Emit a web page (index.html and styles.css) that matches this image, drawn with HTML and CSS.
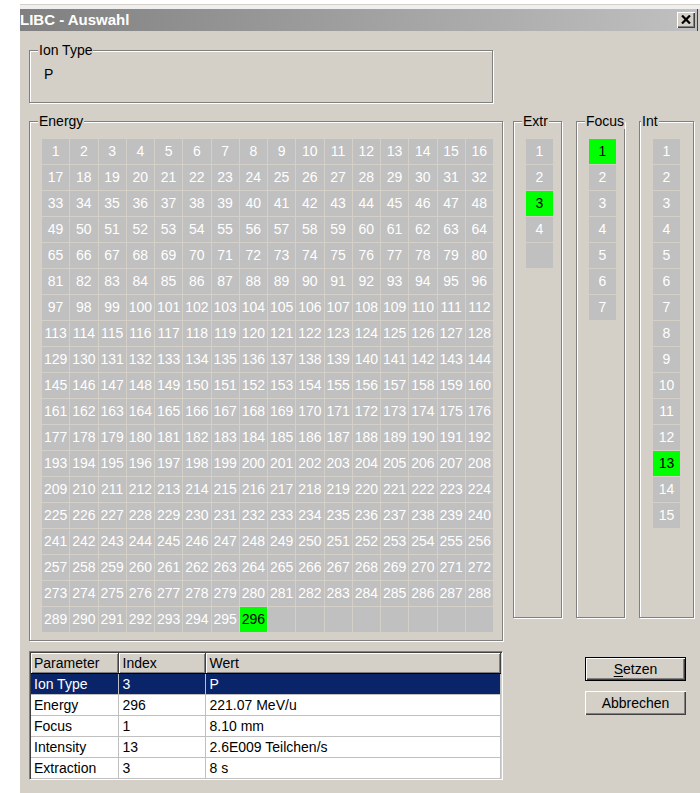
FILE: index.html
```html
<!DOCTYPE html>
<html lang="de">
<head>
<meta charset="utf-8">
<title>LIBC - Auswahl</title>
<link rel="stylesheet" href="styles.css">
</head>
<body>
<div class="window">
  <div class="frame-top"></div>
  <div class="titlebar">
    <span class="title">LIBC - Auswahl</span>
    <span class="close-btn">
      <svg width="10" height="9" viewBox="0 0 10 9"><path d="M1 0.5 L9 8.5 M9 0.5 L1 8.5" stroke="#000" stroke-width="2.2" fill="none"/></svg>
    </span>
  </div>
  <div class="content">
    <fieldset class="group ion-group">
      <legend>Ion Type</legend>
      <div class="ion-value">P</div>
    </fieldset>

    <div class="selectors">
      <fieldset class="group energy-group">
        <legend>Energy</legend>
        <div class="energy-grid">
          <span>1</span><span>2</span><span>3</span><span>4</span><span>5</span><span>6</span><span>7</span><span>8</span><span>9</span><span>10</span><span>11</span><span>12</span><span>13</span><span>14</span><span>15</span><span>16</span>
          <span>17</span><span>18</span><span>19</span><span>20</span><span>21</span><span>22</span><span>23</span><span>24</span><span>25</span><span>26</span><span>27</span><span>28</span><span>29</span><span>30</span><span>31</span><span>32</span>
          <span>33</span><span>34</span><span>35</span><span>36</span><span>37</span><span>38</span><span>39</span><span>40</span><span>41</span><span>42</span><span>43</span><span>44</span><span>45</span><span>46</span><span>47</span><span>48</span>
          <span>49</span><span>50</span><span>51</span><span>52</span><span>53</span><span>54</span><span>55</span><span>56</span><span>57</span><span>58</span><span>59</span><span>60</span><span>61</span><span>62</span><span>63</span><span>64</span>
          <span>65</span><span>66</span><span>67</span><span>68</span><span>69</span><span>70</span><span>71</span><span>72</span><span>73</span><span>74</span><span>75</span><span>76</span><span>77</span><span>78</span><span>79</span><span>80</span>
          <span>81</span><span>82</span><span>83</span><span>84</span><span>85</span><span>86</span><span>87</span><span>88</span><span>89</span><span>90</span><span>91</span><span>92</span><span>93</span><span>94</span><span>95</span><span>96</span>
          <span>97</span><span>98</span><span>99</span><span>100</span><span>101</span><span>102</span><span>103</span><span>104</span><span>105</span><span>106</span><span>107</span><span>108</span><span>109</span><span>110</span><span>111</span><span>112</span>
          <span>113</span><span>114</span><span>115</span><span>116</span><span>117</span><span>118</span><span>119</span><span>120</span><span>121</span><span>122</span><span>123</span><span>124</span><span>125</span><span>126</span><span>127</span><span>128</span>
          <span>129</span><span>130</span><span>131</span><span>132</span><span>133</span><span>134</span><span>135</span><span>136</span><span>137</span><span>138</span><span>139</span><span>140</span><span>141</span><span>142</span><span>143</span><span>144</span>
          <span>145</span><span>146</span><span>147</span><span>148</span><span>149</span><span>150</span><span>151</span><span>152</span><span>153</span><span>154</span><span>155</span><span>156</span><span>157</span><span>158</span><span>159</span><span>160</span>
          <span>161</span><span>162</span><span>163</span><span>164</span><span>165</span><span>166</span><span>167</span><span>168</span><span>169</span><span>170</span><span>171</span><span>172</span><span>173</span><span>174</span><span>175</span><span>176</span>
          <span>177</span><span>178</span><span>179</span><span>180</span><span>181</span><span>182</span><span>183</span><span>184</span><span>185</span><span>186</span><span>187</span><span>188</span><span>189</span><span>190</span><span>191</span><span>192</span>
          <span>193</span><span>194</span><span>195</span><span>196</span><span>197</span><span>198</span><span>199</span><span>200</span><span>201</span><span>202</span><span>203</span><span>204</span><span>205</span><span>206</span><span>207</span><span>208</span>
          <span>209</span><span>210</span><span>211</span><span>212</span><span>213</span><span>214</span><span>215</span><span>216</span><span>217</span><span>218</span><span>219</span><span>220</span><span>221</span><span>222</span><span>223</span><span>224</span>
          <span>225</span><span>226</span><span>227</span><span>228</span><span>229</span><span>230</span><span>231</span><span>232</span><span>233</span><span>234</span><span>235</span><span>236</span><span>237</span><span>238</span><span>239</span><span>240</span>
          <span>241</span><span>242</span><span>243</span><span>244</span><span>245</span><span>246</span><span>247</span><span>248</span><span>249</span><span>250</span><span>251</span><span>252</span><span>253</span><span>254</span><span>255</span><span>256</span>
          <span>257</span><span>258</span><span>259</span><span>260</span><span>261</span><span>262</span><span>263</span><span>264</span><span>265</span><span>266</span><span>267</span><span>268</span><span>269</span><span>270</span><span>271</span><span>272</span>
          <span>273</span><span>274</span><span>275</span><span>276</span><span>277</span><span>278</span><span>279</span><span>280</span><span>281</span><span>282</span><span>283</span><span>284</span><span>285</span><span>286</span><span>287</span><span>288</span>
          <span>289</span><span>290</span><span>291</span><span>292</span><span>293</span><span>294</span><span>295</span><span class="sel">296</span><span></span><span></span><span></span><span></span><span></span><span></span><span></span><span></span>
        </div>
      </fieldset>

      <fieldset class="group col-group extr-group">
        <legend>Extr</legend>
        <div class="col-list">
          <span>1</span><span>2</span><span class="sel">3</span><span>4</span><span></span>
        </div>
      </fieldset>

      <fieldset class="group col-group focus-group">
        <legend>Focus</legend>
        <div class="col-list">
          <span class="sel">1</span><span>2</span><span>3</span><span>4</span><span>5</span><span>6</span><span>7</span>
        </div>
      </fieldset>

      <fieldset class="group col-group int-group">
        <legend>Int</legend>
        <div class="col-list">
          <span>1</span><span>2</span><span>3</span><span>4</span><span>5</span><span>6</span><span>7</span><span>8</span><span>9</span><span>10</span><span>11</span><span>12</span><span class="sel">13</span><span>14</span><span>15</span>
        </div>
      </fieldset>
    </div>

    <div class="bottom">
      <div class="listview">
        <table>
          <thead>
            <tr><th class="c1">Parameter</th><th class="c2">Index</th><th class="c3">Wert</th></tr>
          </thead>
          <tbody>
            <tr class="selected"><td class="c1">Ion Type</td><td class="c2">3</td><td class="c3">P</td></tr>
            <tr><td class="c1">Energy</td><td class="c2">296</td><td class="c3">221.07 MeV/u</td></tr>
            <tr><td class="c1">Focus</td><td class="c2">1</td><td class="c3">8.10 mm</td></tr>
            <tr><td class="c1">Intensity</td><td class="c2">13</td><td class="c3">2.6E009 Teilchen/s</td></tr>
            <tr><td class="c1">Extraction</td><td class="c2">3</td><td class="c3">8 s</td></tr>
          </tbody>
        </table>
      </div>
      <div class="buttons">
        <button class="btn default"><u>S</u>etzen</button>
        <button class="btn">Abbrechen</button>
      </div>
    </div>
  </div>
</div>
</body>
</html>
```
FILE: styles.css
```css
* {
  box-sizing: border-box;
}

body {
  margin: 0;
  background: #ffffff;
  font-family: "Liberation Sans", Arial, sans-serif;
  font-size: 14px;
  color: #000;
}

/* dialog window */
.window {
  margin: 4px 0 0 20px;
  height: 789px;
  background: #d4d0c8;
  display: flex;
  flex-direction: column;
  overflow: hidden;
}

.frame-top {
  height: 5px;
  border-top: 1px solid #d4d0c8;
  background: #efefef;
  flex: none;
}

.titlebar {
  flex: none;
  height: 22px;
  margin-right: 2px;
  border-right: 1px solid #404040;
  display: flex;
  align-items: center;
  justify-content: space-between;
  background: linear-gradient(to right, #808080, #c0c0c0);
  color: #fff;
  padding-right: 2px;
}

.title {
  font-weight: bold;
  font-size: 15px;
  line-height: 22px;
}

.close-btn {
  width: 18px;
  height: 16px;
  display: flex;
  align-items: center;
  justify-content: center;
  background: #d4d0c8;
  box-shadow: inset 1px 1px 0 #fff, inset -1px -1px 0 #404040, inset -2px -2px 0 #808080;
}

.close-btn svg {
  display: block;
  margin: -1px 0 0 -1px;
}

.content {
  padding-left: 9px;
  display: flex;
  flex-direction: column;
}

/* etched group boxes */
.group {
  margin: 0;
  padding: 0;
  min-width: 0;
  border: 1px solid #808080;
  box-shadow: inset 1px 1px 0 #fff, 1px 1px 0 #fff;
}

.group legend {
  margin-left: 8px;
  padding: 0 1px;
  line-height: 16px;
  font-size: 14px;
  background: #d4d0c8;
}

.ion-group {
  margin-top: 11px;
  width: 464px;
  height: 61px;
}

.ion-value {
  padding: 8px 0 0 14px;
  line-height: 16px;
}

.selectors {
  margin-top: 10px;
  display: flex;
  align-items: flex-start;
}

.energy-group {
  width: 474px;
  height: 528px;
}

.energy-grid {
  margin: 10px 0 0 12px;
  width: 451px;
  display: grid;
  grid-template-columns: repeat(16, 1fr);
  grid-auto-rows: 25px;
  gap: 1px;
}

.energy-grid span,
.col-list span {
  background: #c0c0c0;
  color: #fff;
  text-align: center;
  line-height: 25px;
  font-size: 14px;
  white-space: nowrap;
  overflow: hidden;
}

.energy-grid span.sel,
.col-list span.sel {
  background: #00ff00;
  color: #000;
}

.col-group {
  height: 505px;
}

.extr-group {
  margin-left: 10px;
  width: 49px;
}

.focus-group {
  margin-left: 14px;
  width: 49px;
}

.int-group {
  margin-left: 14px;
  width: 55px;
}

.int-group legend {
  margin-left: 1px;
}

.col-list {
  margin: 10px 0 0 12px;
  width: 27px;
  display: flex;
  flex-direction: column;
  gap: 1px;
}

.int-group .col-list {
  margin-left: 13px;
}

.col-list span {
  height: 25px;
}

/* bottom: list view and buttons */
.bottom {
  margin-top: 10px;
  display: flex;
  align-items: flex-start;
}

.listview {
  width: 474px;
  height: 129px;
  background: #fff;
  border-top: 1px solid #808080;
  border-left: 1px solid #808080;
  border-right: 1px solid #fff;
  border-bottom: 1px solid #fff;
  box-shadow: inset 1px 1px 0 #404040, inset -1px -1px 0 #d4d0c8;
  padding: 1px;
}

.listview table {
  border-collapse: collapse;
  table-layout: fixed;
  width: 470px;
}

.listview .c1 { width: 87px; padding-left: 3px; }
.listview .c2 { width: 87px; padding-left: 4px; }
.listview .c3 { padding-left: 4px; }

.listview th {
  height: 20px;
  padding-top: 0;
  padding-bottom: 0;
  font-weight: normal;
  text-align: left;
  background: #d4d0c8;
  box-shadow: inset 1px 1px 0 #fff, inset -1px -1px 0 #808080;
  border-right: 1px solid #404040;
  border-bottom: 1px solid #000;
  line-height: 18px;
  white-space: nowrap;
}

.listview td {
  height: 21px;
  padding-top: 0;
  padding-bottom: 0;
  border-right: 1px solid #c0c0c0;
  border-bottom: 1px solid #c0c0c0;
  line-height: 20px;
  white-space: nowrap;
}

.listview tr.selected td {
  background: #0a246a;
  color: #fff;
}

.buttons {
  margin-left: 82px;
  margin-top: 6px;
  display: flex;
  flex-direction: column;
  gap: 10px;
}

.btn {
  width: 101px;
  height: 24px;
  margin: 0;
  padding: 0;
  font-family: "Liberation Sans", Arial, sans-serif;
  font-size: 14px;
  color: #000;
  background: #d4d0c8;
  border: none;
  box-shadow: inset 1px 1px 0 #fff, inset -1px -1px 0 #404040, inset -2px -2px 0 #808080;
}

.btn.default {
  border: 1px solid #000;
  box-shadow: inset 1px 1px 0 #fff, inset -1px -1px 0 #404040, inset -2px -2px 0 #808080;
}

.btn u {
  text-decoration: underline;
  text-underline-offset: 2px;
}
```
